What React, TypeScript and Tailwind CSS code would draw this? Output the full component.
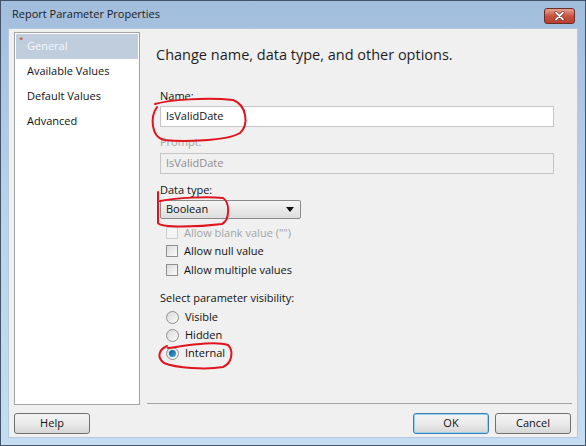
import { ReactNode } from 'react';

const font = "font-['Open_Sans',sans-serif]";

const NavItem = ({ label, active }: { label: string; active?: boolean }) => (
  <div
    className={`relative h-[25px] flex items-center pl-[11px] text-[11px] ${
      active ? 'bg-[#bfcddd] text-[#f4f7fa]' : 'text-[#111]'
    }`}
  >
    {active && <span className="absolute left-[3px] top-[1px] text-[8px] leading-none text-[#c0302c]">*</span>}
    {label}
  </div>
);

const Checkbox = ({ label, disabled }: { label: string; disabled?: boolean }) => (
  <div className="h-[18px] flex items-center pl-[6px]">
    <span
      className={`w-[12px] h-[12px] border ${
        disabled
          ? 'border-[#cdcdcd] bg-[#f4f4f4]'
          : 'border-[#8e8f8f] bg-gradient-to-br from-[#dcdcdc] to-[#fbfbfb]'
      }`}
    />
    <span className={`ml-[6px] text-[11px] ${disabled ? 'text-[#a3a3a3]' : 'text-[#111]'}`}>{label}</span>
  </div>
);

const Radio = ({ label, checked }: { label: string; checked?: boolean }) => (
  <div className="h-[18px] flex items-center pl-[6px]">
    <span className="w-[13px] h-[13px] rounded-full border border-[#8e8f8f] bg-gradient-to-br from-[#d9d9d9] to-[#fbfbfb] flex items-center justify-center">
      {checked && <span className="w-[7px] h-[7px] rounded-full bg-gradient-to-br from-[#0c5a8c] to-[#3aa7e4]" />}
    </span>
    <span className="ml-[6px] text-[11px] text-[#111]">{label}</span>
  </div>
);

const Button = ({ children, primary, w }: { children: ReactNode; primary?: boolean; w: string }) => (
  <button
    className={`${w} h-[21px] rounded-[3px] border text-[11px] text-[#111] bg-gradient-to-b from-[#f3f3f3] via-[#ebebeb] to-[#d6d6d6] ${
      primary ? 'border-[#3c7fb1] shadow-[inset_0_0_0_1px_#98d1ef]' : 'border-[#707070]'
    }`}
  >
    {children}
  </button>
);

export default function App() {
  return (
    <div className={`relative w-[586px] h-[446px] overflow-hidden flex flex-col border border-[#435369] bg-gradient-to-b from-[#a2bedd] via-[#bcd3eb] to-[#c6dcf1] ${font}`}>
      {/* Title bar */}
      <div className="h-[27px] flex items-center justify-between pl-[11px] pr-[10px]">
        <span className="text-[11px] text-[#1a1a1a]">Report Parameter Properties</span>
        <span className="w-[31px] h-[16px] mt-[2px] rounded-[3px] border border-[#6b2b26] bg-gradient-to-b from-[#e6a393] via-[#c9523f] to-[#b8402e] flex items-center justify-center">
          <svg width="11" height="10" viewBox="0 0 11 10">
            <path d="M2 1.5 L9 8.5 M9 1.5 L2 8.5" stroke="#5a1a12" strokeWidth="3" strokeLinecap="round" />
            <path d="M2 1.5 L9 8.5 M9 1.5 L2 8.5" stroke="#fff" strokeWidth="1.8" strokeLinecap="round" />
          </svg>
        </span>
      </div>

      {/* Client area */}
      <div className="flex-1 mx-[7px] mb-[7px] bg-[#f0f0f0] border border-[#b5c8de] flex flex-col">
        <div className="flex pl-[5px] pt-[3px]">
          {/* Nav */}
          <div className="w-[126px] h-[373px] border border-[#a3a3a3] bg-white p-px">
            <NavItem label="General" active />
            <NavItem label="Available Values" />
            <NavItem label="Default Values" />
            <NavItem label="Advanced" />
          </div>

          {/* Main panel */}
          <div className="ml-[7px] mr-[5px] flex-1 h-[372px] border-b border-[#a0a0a0] flex flex-col">
            <div className="pl-[9px] pt-[12px] text-[14.5px] leading-[22px] text-[#1e1e1e]">
              Change name, data type, and other options.
            </div>

            <div className="pl-[13px] pt-[22px] flex flex-col text-[11px] text-[#111]">
              <div className="leading-[16px]">Name:</div>
              <div className="mt-[2px] w-[394px] h-[21px] border border-[#c5c5c5] bg-white flex items-center pl-[5px]">
                IsValidDate
              </div>

              <div className="mt-[7px] leading-[16px] text-[#a3a3a3]">Prompt:</div>
              <div className="mt-[3px] w-[394px] h-[21px] border border-[#c5c5c5] bg-[#f0f0f0] flex items-center pl-[5px] text-[#8d8d8d]">
                IsValidDate
              </div>

              <div className="mt-[8px] leading-[16px]">Data type:</div>
              <div className="mt-[2px] w-[141px] h-[19px] rounded-[2px] border border-[#8a8a8a] bg-gradient-to-b from-[#f4f4f4] to-[#dedede] flex items-center justify-between pl-[5px] pr-[6px]">
                <span>Boolean</span>
                <svg width="8" height="5" viewBox="0 0 8 5">
                  <path d="M0 0 H8 L4 5 Z" fill="#111" />
                </svg>
              </div>

              <div className="mt-[5px] flex flex-col">
                <Checkbox label={'Allow blank value ("")'} disabled />
                <Checkbox label="Allow null value" />
                <div className="mt-px">
                  <Checkbox label="Allow multiple values" />
                </div>
              </div>

              <div className="mt-[11px] leading-[16px]">Select parameter visibility:</div>
              <div className="mt-[2px] flex flex-col">
                <Radio label="Visible" />
                <Radio label="Hidden" />
                <Radio label="Internal" checked />
              </div>
            </div>
          </div>
        </div>

        {/* Buttons */}
        <div className="mt-[8px] flex items-center pl-[5px] pr-[6px]">
          <Button w="w-[76px]">Help</Button>
          <div className="flex-1" />
          <Button w="w-[76px]" primary>OK</Button>
          <div className="w-[6px]" />
          <Button w="w-[76px]">Cancel</Button>
        </div>
      </div>

      {/* Red annotations */}
      <svg className="absolute inset-0 pointer-events-none" width="586" height="446" viewBox="0 0 586 446" fill="none">
        <path
          d="M154 103 C168 99 205 96 232 99 C246 104 248 124 239 132 C226 140 182 141 163 139 C150 136 149 116 156 106"
          stroke="#e0141c"
          strokeWidth="2"
          strokeLinecap="round"
        />
        <path
          d="M157 191 L157 222 C160 227 198 226 221 223 C229 219 229 201 222 197 C205 195 176 197 159 200"
          stroke="#e0141c"
          strokeWidth="2"
          strokeLinecap="round"
        />
        <path
          d="M167 347 C190 344 214 340 227 344 C233 350 231 362 222 366 C205 369 175 367 163 362 C156 357 157 349 166 345"
          stroke="#e0141c"
          strokeWidth="2"
          strokeLinecap="round"
        />
      </svg>
    </div>
  );
}
